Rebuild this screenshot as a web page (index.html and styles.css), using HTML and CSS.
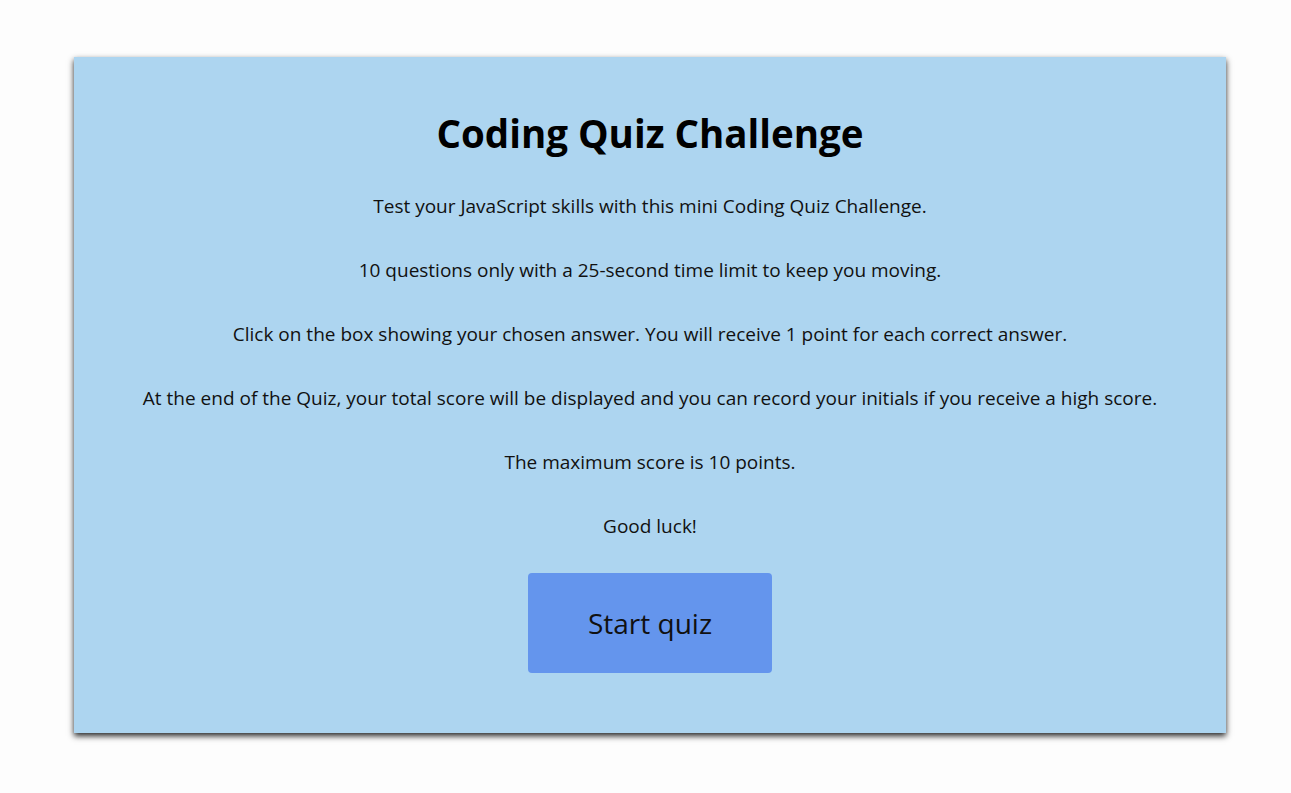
FILE: index.html
```html
<!DOCTYPE html>
<html lang="en">
<head>
<meta charset="utf-8">
<title>Coding Quiz Challenge</title>
<link rel="stylesheet" href="styles.css">
</head>
<body>
<main class="card">
  <h1 class="title">Coding Quiz Challenge</h1>
  <div class="intro">
    <p>Test your JavaScript skills with this mini Coding Quiz Challenge.</p>
    <p>10 questions only with a 25-second time limit to keep you moving.</p>
    <p>Click on the box showing your chosen answer. You will receive 1 point for each correct answer.</p>
    <p>At the end of the Quiz, your total score will be displayed and you can record your initials if you receive a high score.</p>
    <p>The maximum score is 10 points.</p>
    <p>Good luck!</p>
  </div>
  <button class="start">Start quiz</button>
</main>
</body>
</html>
```
FILE: styles.css
```css
html, body {
  margin: 0;
  padding: 0;
  background: #fdfdfd;
}
body {
  font-family: "Open Sans", "Noto Sans", sans-serif;
  color: #111;
  padding: 57px 0 60px 74px;
}
.card {
  box-sizing: border-box;
  width: 1152px;
  height: 676px;
  background: #add5f0;
  box-shadow: 0 3px 6px rgba(0, 0, 0, 0.85);
  display: flex;
  flex-direction: column;
  align-items: center;
  padding-top: 52px;
}
.title {
  margin: 0;
  font-size: 38.5px;
  line-height: 48px;
  font-weight: 700;
  color: #000;
}
.intro {
  margin-top: 37px;
  display: flex;
  flex-direction: column;
  align-items: center;
  gap: 40px;
}
.intro p {
  margin: 0;
  font-size: 19px;
  line-height: 24px;
  text-align: center;
}
.start {
  margin-top: 35px;
  width: 244px;
  height: 100px;
  border: none;
  border-radius: 4px;
  background: #6495ed;
  color: #111;
  font-family: inherit;
  font-size: 28px;
  cursor: pointer;
}
```
